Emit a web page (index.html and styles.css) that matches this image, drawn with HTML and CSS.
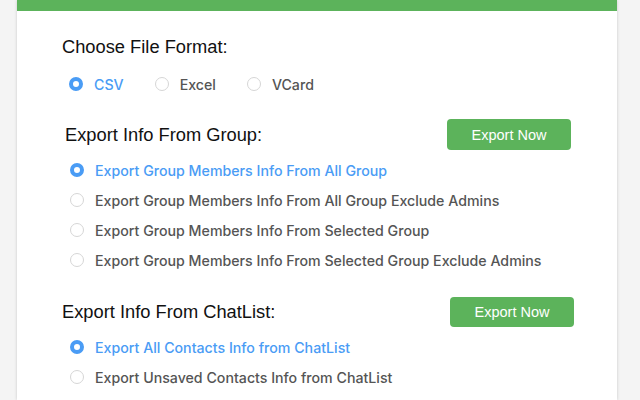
FILE: index.html
```html
<!DOCTYPE html>
<html>
<head>
<meta charset="utf-8">
<link rel="stylesheet" href="styles.css">
</head>
<body>
<div class="card">
  <section class="format">
    <h2 class="title">Choose File Format:</h2>
    <div class="format-row">
      <label class="opt checked"><span class="radio"></span>CSV</label>
      <label class="opt"><span class="radio"></span>Excel</label>
      <label class="opt"><span class="radio"></span>VCard</label>
    </div>
  </section>

  <section class="group">
    <div class="head head-group">
      <h2 class="title">Export Info From Group:</h2>
      <button class="btn">Export Now</button>
    </div>
    <ul class="list">
      <li class="opt checked"><span class="radio"></span>Export Group Members Info From All Group</li>
      <li class="opt"><span class="radio"></span>Export Group Members Info From All Group Exclude Admins</li>
      <li class="opt"><span class="radio"></span>Export Group Members Info From Selected Group</li>
      <li class="opt"><span class="radio"></span>Export Group Members Info From Selected Group Exclude Admins</li>
    </ul>
  </section>

  <section class="chat">
    <div class="head head-chat">
      <h2 class="title">Export Info From ChatList:</h2>
      <button class="btn">Export Now</button>
    </div>
    <ul class="list">
      <li class="opt checked"><span class="radio"></span>Export All Contacts Info from ChatList</li>
      <li class="opt"><span class="radio"></span>Export Unsaved Contacts Info from ChatList</li>
    </ul>
  </section>
</div>
</body>
</html>
```

FILE: styles.css
```css
html, body {
  margin: 0;
  padding: 0;
  height: 100%;
  overflow: hidden;
}
body {
  background: #f4f4f4;
  font-family: "Liberation Sans", Arial, sans-serif;
}
.card {
  margin-left: 17px;
  width: 600px;
  height: 100%;
  box-sizing: border-box;
  background: #fff;
  border-top: 11px solid #5cb35b;
  box-shadow: 0 0 3px rgba(0, 0, 0, 0.18);
  padding: 25px 0 0 45px;
}
.title {
  margin: 0;
  font-size: 18.3px;
  font-weight: normal;
  line-height: 22px;
  color: #111;
}
.opt {
  display: flex;
  align-items: center;
  height: 30px;
  font-family: Inter, "Noto Sans", sans-serif;
  font-weight: 500;
  font-size: 14.2px;
  color: #555;
}
.opt.checked {
  color: #4a9cf5;
}
.radio {
  width: 14px;
  height: 14px;
  box-sizing: border-box;
  border: 1px solid #d6d6d6;
  border-radius: 50%;
  margin-right: 11px;
  flex: none;
  background: #fff;
}
.checked .radio {
  border: 4.5px solid #4a9cf5;
  background: #fff;
}
.format-row {
  display: flex;
  gap: 31px;
  margin-top: 11px;
  padding-left: 7px;
}
.head {
  display: flex;
  align-items: center;
  justify-content: space-between;
  height: 31px;
}
.head-group {
  margin-top: 20px;
  padding-left: 3px;
  margin-right: 46px;
}
.head-chat {
  margin-top: 22px;
  margin-right: 43px;
  height: 30px;
}
.btn {
  width: 124px;
  height: 100%;
  border: none;
  border-radius: 4px;
  background: #5cb35b;
  color: #fff;
  font-family: "Liberation Sans", Arial, sans-serif;
  font-size: 14.5px;
  padding: 0;
}
.list {
  list-style: none;
  margin: 5px 0 0;
  padding: 0 0 0 8px;
}
```
